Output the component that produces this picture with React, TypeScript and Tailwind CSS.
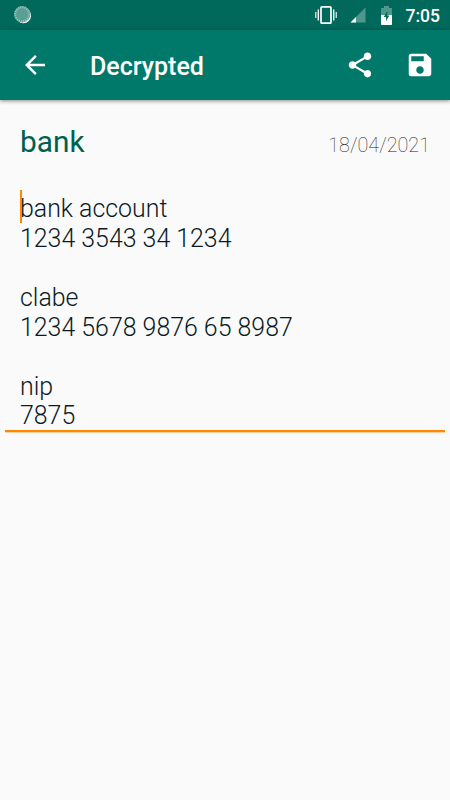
/**
 * Decrypted note screen — status bar, toolbar and editable note body.
 */

import { useState } from 'react';
import { MdArrowBack, MdSave, MdShare } from 'react-icons/md';

interface Note {
  title: string;
  date: string;
  lines: string[];
}

const NOTE: Note = {
  title: 'bank',
  date: '18/04/2021',
  lines: [
    'bank account',
    '1234 3543 34 1234',
    '',
    'clabe',
    '1234 5678 9876 65 8987',
    '',
    'nip',
    '7875',
  ],
};

function StatusBar() {
  return (
    <div className="flex h-[30px] items-center bg-[#00695c] pl-[13px] pr-[10px] text-white">
      {/* Sync spinner */}
      <svg className="h-5 w-5" viewBox="0 0 20 20">
        <circle cx="10.4" cy="10.7" r="7.6" fill="#fff" />
        <circle cx="9.2" cy="9.3" r="8.2" fill="#5a9e94" />
        <circle cx="9.2" cy="9.3" r="7" fill="none" stroke="#a3cac4" strokeWidth="2" strokeDasharray="1 1.2" />
      </svg>

      <div className="ml-auto flex items-center">
        {/* Vibrate */}
        <svg className="mr-[13px] h-5 w-[22px]" viewBox="0 0 22 20" fill="none" stroke="#fff">
          <rect x="6" y="1.8" width="10" height="16.4" rx="1" strokeWidth="1.7" />
          <path d="M3.3 4.5v11M18.7 4.5v11" strokeWidth="1.4" />
          <path d="M.8 7v6M21.2 7v6" strokeWidth="1.1" />
        </svg>
        {/* Signal */}
        <svg className="mr-[15px] h-4 w-4" viewBox="0 0 16 16">
          <path d="M.5 15.5l15-15v15z" fill="#4f978d" />
          <path d="M.5 15.5l5.5-5.5v5.5z" fill="#fff" />
        </svg>
        {/* Battery */}
        <svg className="mr-[14px] h-[19px] w-[11px]" viewBox="0 0 11 19">
          <path d="M3 0h5v2h3v7H0V2h3z" fill="#4f978d" />
          <path d="M0 9h11v9.3a.7.7 0 01-.7.7H.7a.7.7 0 01-.7-.7z" fill="#fff" />
          <path d="M6.3 5L2.8 11h2.3v4.2L8.3 9.4h-2z" fill="#00695c" />
        </svg>
        <span className="pt-[3px] text-[17.5px] font-medium leading-none">7:05</span>
      </div>
    </div>
  );
}

function Toolbar() {
  return (
    <header className="flex h-[70px] items-center bg-[#00796b] px-5 text-white shadow-[0_1px_4px_rgba(0,0,0,0.45)]">
      <button title="Back">
        <MdArrowBack className="h-[30px] w-[30px]" />
      </button>
      <h1 className="ml-10 pt-[2px] text-[25px] font-medium leading-none">Decrypted</h1>
      <div className="-mr-[5px] ml-auto flex gap-[30px]">
        <button title="Share">
          <MdShare className="h-[30px] w-[30px]" />
        </button>
        <button title="Save">
          <MdSave className="h-[30px] w-[30px]" />
        </button>
      </div>
    </header>
  );
}

export default function App() {
  const [note] = useState<Note>(NOTE);

  return (
    <div className="h-[800px] w-[450px] overflow-hidden bg-[#fafafa] font-['Roboto',sans-serif]">
      <StatusBar />
      <Toolbar />

      <main>
        <div className="flex h-[90px] items-start justify-between px-5 pt-6">
          <h2 className="text-[29.8px] leading-[35px] text-[#006050]">{note.title}</h2>
          <span className="mt-[10px] text-[19.8px] font-thin leading-6 text-[#222]">{note.date}</span>
        </div>

        {/* Note body */}
        <div className="relative mx-[5px] h-[242px] border-b-2 border-[#ff8800] px-[15px] pt-[4.3px] text-[24.9px] font-light leading-[29.6px] text-[#0b1a24] shadow-[0_1px_0_#ffd0a0]">
          {/* Caret */}
          <div className="absolute left-[15px] top-0 h-[33px] w-[2px] bg-[#ff8800]" />
          {note.lines.map((line, i) => (
            <p key={i} className="h-[29.6px] whitespace-pre">{line}</p>
          ))}
        </div>
      </main>
    </div>
  );
}
